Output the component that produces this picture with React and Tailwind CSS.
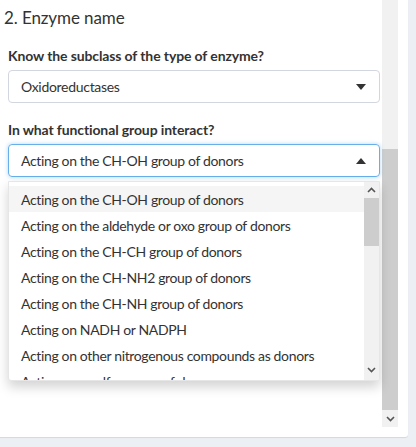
import React from 'react';

const options = [
    'Acting on the CH-OH group of donors',
    'Acting on the aldehyde or oxo group of donors',
    'Acting on the CH-CH group of donors',
    'Acting on the CH-NH2 group of donors',
    'Acting on the CH-NH group of donors',
    'Acting on NADH or NADPH',
    'Acting on other nitrogenous compounds as donors',
    'Acting on a sulfur group of donors',
];

const Caret = ({ up }) => (
    <svg width="10" height="6" viewBox="0 0 10 6" className="shrink-0">
        {up ? <path d="M0 6 L5 0 L10 6 Z" fill="#333" /> : <path d="M0 0 L10 0 L5 6 Z" fill="#333" />}
    </svg>
);

const Chevron = ({ up }) => (
    <svg width="9" height="6" viewBox="0 0 9 6">
        <path d={up ? 'M1 5 L4.5 1.5 L8 5' : 'M1 1 L4.5 4.5 L8 1'} fill="none" stroke="#555" strokeWidth="1.6" />
    </svg>
);

const App = () => {
    return (
        <div className="h-[447px] bg-[#ecf0f5] overflow-hidden text-[#333]" style={{ fontFamily: 'Lato, "Open Sans", sans-serif' }}>
            <div className="w-[408px] h-[437px] bg-white flex pr-[10px] pb-[10px] rounded-br-[3px] shadow-[0_1px_1px_rgba(0,0,0,0.1)]">
                <div className="w-[382px] relative pl-2 pr-[2px]">
                    <h4 className="text-[17px] leading-[20px] mt-[8px] -ml-1 text-[#333] tracking-[-0.1px]">2. Enzyme name</h4>

                    <label className="block font-bold text-[14px] mt-[17px] tracking-[-0.12px]">Know the subclass of the type of enzyme?</label>
                    <div className="mt-[4px] h-[33px] border border-[#d2d6de] rounded-[4px] flex items-center justify-between pl-3 pr-[13px] text-[14px] tracking-[-0.3px]">
                        <span>Oxidoreductases</span>
                        <Caret />
                    </div>

                    <label className="block font-bold text-[14px] mt-[16px] tracking-[-0.12px]">In what functional group interact?</label>
                    <div className="mt-[4px] h-[33px] border border-[#66afe9] rounded-[4px] flex items-center justify-between pl-3 pr-[13px] text-[14px] tracking-[-0.35px] shadow-[0_0_4px_rgba(102,175,233,0.5)]">
                        <span>Acting on the CH-OH group of donors</span>
                        <Caret up />
                    </div>

                    <div className="absolute left-2 right-[2px] top-[181px] h-[200px] bg-white border border-[#e6e6e6] rounded-b-[3px] shadow-[0_6px_12px_rgba(0,0,0,0.175)] flex overflow-hidden">
                        <div className="flex-1 pt-[4px] overflow-hidden">
                            {options.map((o, i) => (
                                <div key={o} className={`h-[26px] flex items-center pl-3 text-[14px] tracking-[-0.35px] whitespace-nowrap ${i === 0 ? 'bg-[#f5f5f5]' : ''}`}>
                                    {o}
                                </div>
                            ))}
                        </div>
                        <div className="w-[15px] bg-[#f1f1f1] flex flex-col">
                            <div className="h-[16px] flex items-center justify-center"><Chevron up /></div>
                            <div className="h-[48px] bg-[#cdcdcd]" />
                            <div className="flex-1" />
                            <div className="h-[16px] flex items-center justify-center mb-[2px]"><Chevron /></div>
                        </div>
                    </div>
                </div>

                <div className="w-[16px] h-[427px] bg-[#f1f1f1] flex flex-col">
                    <div className="h-[149px]" />
                    <div className="flex-1 bg-[#cdcdcd]" />
                    <div className="h-[17px] flex items-center justify-center"><Chevron /></div>
                </div>
            </div>
        </div>
    );
};

export default App;
